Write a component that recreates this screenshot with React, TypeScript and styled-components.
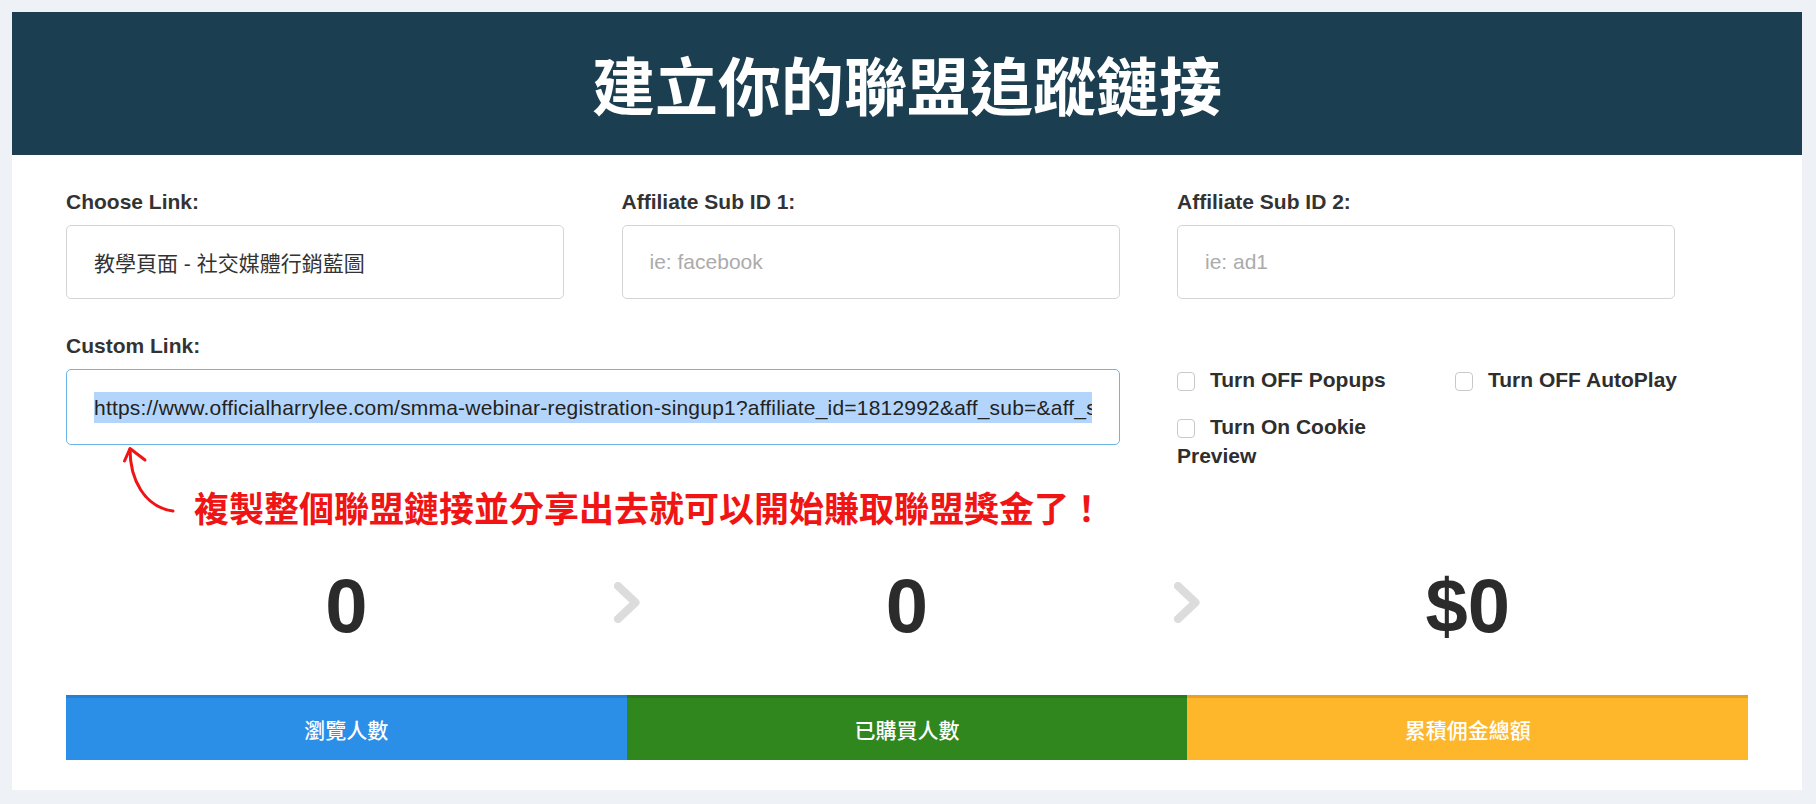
import React from "react";
import styled, { createGlobalStyle } from "styled-components";

const GlobalStyle = createGlobalStyle`
  html, body {
    margin: 0;
    padding: 0;
    background: #eef2f7;
  }
  body {
    font-family: "Liberation Sans", Arial, "Noto Sans CJK TC", sans-serif;
    color: #333;
  }
  * { box-sizing: border-box; }
`;

const Page = styled.div`
  padding: 12px 14px 13px 12px;
`;

const Card = styled.div`
  background: #ffffff;
`;

const Header = styled.header`
  height: 143px;
  background: #1b3f51;
  display: flex;
  align-items: center;
  justify-content: center;
`;

const Title = styled.h1`
  margin: 0;
  font-family: "Noto Sans CJK TC", sans-serif;
  font-size: 63px;
  font-weight: 700;
  line-height: 1;
  color: #ffffff;
  padding-bottom: 2px;
`;

const Body = styled.div`
  padding: 32px 54px 30px;
`;

const FormGrid = styled.div`
  display: grid;
  grid-template-columns: repeat(3, 498px);
  column-gap: 57.5px;
  row-gap: 32px;
  align-items: start;
`;

const Group = styled.div<{ $span?: number }>`
  grid-column: span ${(p) => p.$span ?? 1};
`;

const Label = styled.label`
  display: block;
  font-size: 21px;
  font-weight: 700;
  line-height: 30px;
  color: #333;
  margin-bottom: 8px;
`;

const Field = styled.div<{ $h: number; $focused?: boolean }>`
  height: ${(p) => p.$h}px;
  border: 1px solid ${(p) => (p.$focused ? "#6cb6e6" : "#d4d4d4")};
  border-radius: 5px;
  padding: 0 27px;
  display: flex;
  align-items: center;
  font-size: 21px;
  color: #333;
  background: #fff;
`;

const FieldText = styled.div`
  flex: 1;
  min-width: 0;
  overflow: hidden;
  white-space: nowrap;
  font-family: "Liberation Sans", Arial, "Noto Sans CJK TC", sans-serif;
`;

const Placeholder = styled.span`
  color: #ababab;
`;

const Selected = styled.span`
  display: inline-block;
  background: #b4d5fb;
  line-height: 31px;
  color: #222;
  letter-spacing: 0.2px;
`;

const Options = styled.div`
  width: 540px;
  padding-top: 34px;
  display: flex;
  flex-wrap: wrap;
  column-gap: 29px;
  row-gap: 18px;
`;

const CheckLabel = styled.label`
  width: 249px;
  font-size: 21px;
  font-weight: 700;
  line-height: 29px;
  color: #2e2e2e;
`;

const Check = styled.input`
  appearance: none;
  -webkit-appearance: none;
  display: inline-block;
  width: 18px;
  height: 19px;
  margin: 0 15px 0 0;
  border: 1px solid #c9c9c9;
  border-radius: 4px;
  background: #fff;
  vertical-align: -4px;
`;

const Annotation = styled.div`
  display: flex;
  align-items: flex-start;
  padding-left: 54px;
`;

const ArrowSvg = styled.svg`
  flex-shrink: 0;
  display: block;
`;

const AnnotationText = styled.div`
  margin: 44px 0 0 10px;
  font-family: "Noto Sans CJK TC", sans-serif;
  font-size: 35px;
  font-weight: 700;
  line-height: 35px;
  color: #f01414;
  white-space: nowrap;
`;

const Stats = styled.div`
  margin-top: 40px;
  display: grid;
  grid-template-columns: 1fr 0 1fr 0 1fr;
  align-items: center;
`;

const StatNumber = styled.div`
  font-size: 76px;
  font-weight: 700;
  line-height: 84px;
  text-align: center;
  color: #2b2b2b;
`;

const ChevronCell = styled.div`
  display: flex;
  justify-content: center;
  overflow: visible;
`;

const ChevronSvg = styled.svg`
  flex-shrink: 0;
  display: block;
  margin-bottom: 7px;
`;

const Bars = styled.div`
  margin-top: 47px;
  display: grid;
  grid-template-columns: repeat(3, 1fr);
`;

const Bar = styled.div<{ $bg: string }>`
  height: 65px;
  background: ${(p) => p.$bg};
  border-top: 3px solid rgba(0, 0, 0, 0.1);
  display: flex;
  align-items: center;
  justify-content: center;
  font-family: "Noto Sans CJK TC", sans-serif;
  font-size: 21px;
  font-weight: 500;
  color: #ffffff;
`;

const Chevron = () => (
  <ChevronSvg width="26" height="41" viewBox="0 0 26 41">
    <polyline
      points="4,4 21.5,20.5 4,37"
      fill="none"
      stroke="#dcdcdc"
      strokeWidth="8"
      strokeLinecap="round"
      strokeLinejoin="round"
    />
  </ChevronSvg>
);

const url =
  "https://www.officialharrylee.com/smma-webinar-registration-singup1?affiliate_id=1812992&aff_sub=&aff_sub2=";

export default function App() {
  return (
    <>
      <GlobalStyle />
      <Page>
        <Card>
          <Header>
            <Title>建立你的聯盟追蹤鏈接</Title>
          </Header>
          <Body>
            <FormGrid>
              <Group>
                <Label>Choose Link:</Label>
                <Field $h={74}>
                  <FieldText>教學頁面 - 社交媒體行銷藍圖</FieldText>
                </Field>
              </Group>
              <Group>
                <Label>Affiliate Sub ID 1:</Label>
                <Field $h={74}>
                  <FieldText>
                    <Placeholder>ie: facebook</Placeholder>
                  </FieldText>
                </Field>
              </Group>
              <Group>
                <Label>Affiliate Sub ID 2:</Label>
                <Field $h={74}>
                  <FieldText>
                    <Placeholder>ie: ad1</Placeholder>
                  </FieldText>
                </Field>
              </Group>
              <Group $span={2}>
                <Label>Custom Link:</Label>
                <Field $h={76} $focused>
                  <FieldText>
                    <Selected>{url}</Selected>
                  </FieldText>
                </Field>
                <Annotation>
                  <ArrowSvg width="64" height="72" viewBox="0 0 64 72">
                    <path
                      d="M10,4 C10,34 24,62 53,66"
                      fill="none"
                      stroke="#f01414"
                      strokeWidth="3"
                      strokeLinecap="round"
                    />
                    <path
                      d="M4.5,16 L10,3.5 L25,15"
                      fill="none"
                      stroke="#f01414"
                      strokeWidth="3"
                      strokeLinecap="round"
                      strokeLinejoin="round"
                    />
                  </ArrowSvg>
                  <AnnotationText>
                    複製整個聯盟鏈接並分享出去就可以開始賺取聯盟獎金了！
                  </AnnotationText>
                </Annotation>
              </Group>
              <Options>
                <CheckLabel>
                  <Check type="checkbox" />
                  Turn OFF Popups
                </CheckLabel>
                <CheckLabel>
                  <Check type="checkbox" />
                  Turn OFF AutoPlay
                </CheckLabel>
                <CheckLabel>
                  <Check type="checkbox" />
                  Turn On Cookie Preview
                </CheckLabel>
              </Options>
            </FormGrid>
            <Stats>
              <StatNumber>0</StatNumber>
              <ChevronCell>
                <Chevron />
              </ChevronCell>
              <StatNumber>0</StatNumber>
              <ChevronCell>
                <Chevron />
              </ChevronCell>
              <StatNumber>$0</StatNumber>
            </Stats>
            <Bars>
              <Bar $bg="#2b8fe8">瀏覽人數</Bar>
              <Bar $bg="#2f871d">已購買人數</Bar>
              <Bar $bg="#feb62b">累積佣金總額</Bar>
            </Bars>
          </Body>
        </Card>
      </Page>
    </>
  );
}
